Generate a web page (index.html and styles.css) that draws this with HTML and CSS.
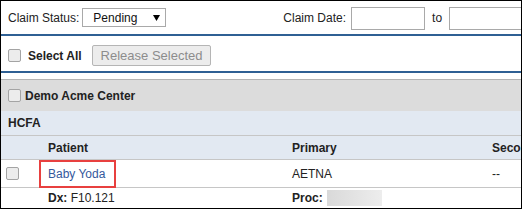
FILE: index.html
```html
<!DOCTYPE html>
<html lang="en">
<head>
    <meta charset="UTF-8">
    <title>Claims</title>
    <link rel="stylesheet" href="styles.css">
</head>
<body>
<div class="frame">
    <div class="filters">
        <label class="lbl">Claim Status:</label>
        <select class="status">
            <option>Pending</option>
        </select>
        <label class="lbl date-lbl">Claim Date:</label>
        <input class="date" type="text">
        <span class="to">to</span>
        <input class="date" type="text">
    </div>
    <div class="actions">
        <input class="chk" type="checkbox">
        <span class="select-all">Select All</span>
        <button class="release" disabled>Release Selected</button>
    </div>

    <div class="panel">
        <div class="row group">
            <input class="chk" type="checkbox">
            <span>Demo Acme Center</span>
        </div>
        <div class="row form-type">HCFA</div>
        <div class="row cols head">
            <div></div>
            <div>Patient</div>
            <div>Primary</div>
            <div>Secondary</div>
        </div>
        <div class="row cols data">
            <div><input class="chk" type="checkbox"></div>
            <div><a class="patient" href="#">Baby Yoda</a></div>
            <div>AETNA</div>
            <div>--</div>
        </div>
        <div class="row cols codes">
            <div></div>
            <div><b>Dx:</b> F10.121</div>
            <div><b>Proc:</b> <span class="blur"></span></div>
            <div></div>
        </div>
    </div>
</div>
</body>
</html>
```

FILE: styles.css
```css
body {
    margin: 0;
    font-family: "Liberation Sans", Arial, sans-serif;
    font-size: 12px;
    color: #222;
}
.frame {
    width: 522px;
    height: 209px;
    box-sizing: border-box;
    border: 1px solid #000;
    overflow: hidden;
}
.filters {
    height: 33px;
    display: flex;
    align-items: center;
    padding-left: 7px;
    border-bottom: 2px solid #2f6094;
    white-space: nowrap;
}
.filters > * {
    flex-shrink: 0;
}
.status {
    appearance: none;
    -webkit-appearance: none;
    width: 84px;
    height: 19px;
    margin: 0 0 0 3px;
    padding: 0 0 0 10px;
    border: 1px solid #a9a9a9;
    border-radius: 0;
    background: #fff url("data:image/svg+xml;utf8,<svg xmlns='http://www.w3.org/2000/svg' width='7' height='6'><path d='M0 0h7L3.5 6z' fill='%23000'/></svg>") no-repeat right 5px center;
    font-family: "Liberation Sans", Arial, sans-serif;
    font-size: 12px;
    color: #111;
}
.date-lbl {
    margin-left: 117px;
}
.date {
    width: 74px;
    height: 23px;
    box-sizing: border-box;
    margin: 1px 0 0 5px;
    border: 1px solid #a9a9a9;
    padding: 0;
}
.to {
    margin: 0 2px 0 7px;
}
.actions {
    height: 37px;
    box-sizing: border-box;
    padding: 4px 0 0 7px;
    display: flex;
    align-items: center;
    border-bottom: 2px solid #2f6094;
    margin-bottom: 6px;
}
.chk {
    appearance: none;
    -webkit-appearance: none;
    width: 13px;
    height: 13px;
    margin: 0;
    border: 1px solid #a4a4a4;
    border-radius: 2px;
    background: #ececec;
}
.select-all {
    font-weight: bold;
    margin-left: 7px;
}
.release {
    margin-left: 10px;
    height: 21px;
    padding: 0 8px;
    border: 1px solid #b5b5b5;
    border-radius: 2px;
    background: #ececec;
    color: #8c8c8c;
    font-family: "Liberation Sans", Arial, sans-serif;
    font-size: 13px;
}
.panel {
    width: 660px;
    border-top: 1px solid #b4b4b4;
}
.row {
    box-sizing: border-box;
    display: flex;
    align-items: center;
    white-space: nowrap;
}
.group {
    height: 31px;
    background: #dcdcdc;
    padding-left: 7px;
    font-weight: bold;
}
.group .chk {
    margin-right: 4px;
}
.form-type {
    height: 25px;
    background: #e2e9f2;
    border-bottom: 1px solid #c6c6c6;
    padding-left: 7px;
    font-weight: bold;
}
.cols {
    display: grid;
    grid-template-columns: 39px 244px 200px 200px;
    align-items: center;
}
.cols > div {
    padding-left: 8px;
}
.cols > div:first-child {
    padding-left: 5px;
}
.head {
    height: 24px;
    background: #e2e9f2;
    border-bottom: 1px solid #c6c6c6;
    font-weight: bold;
}
.data {
    height: 28px;
    border-bottom: 1px solid #c6c6c6;
}
.data .chk {
    display: block;
}
.patient {
    color: #34589c;
    text-decoration: none;
    padding: 0 4px 0 2px;
    margin-left: -2px;
    outline: 2px solid #e8403f;
    outline-offset: 5px;
}
.codes {
    height: 20px;
}
.blur {
    display: inline-block;
    width: 55px;
    height: 16px;
    margin-left: 1px;
    vertical-align: -4px;
    background: linear-gradient(to right, #d9d9d9, #ededed);
}
```
